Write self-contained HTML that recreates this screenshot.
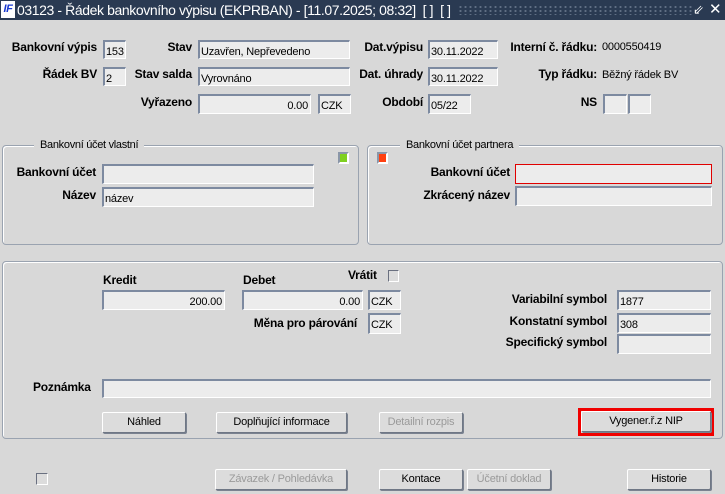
<!DOCTYPE html>
<html><head><meta charset="utf-8"><style>
*{box-sizing:border-box}
body{margin:0;width:725px;height:494px;background:#d8d8d8;position:relative;overflow:hidden;font-family:"Liberation Sans",sans-serif;font-size:12px;color:#000}
.a{position:absolute;white-space:nowrap}
.tb{left:0;top:0;width:725px;height:20px;background:#2a3a52;color:#fff;font-size:14px;letter-spacing:-0.4px;line-height:20px}
.f{position:absolute;background:#ececec;border-top:2px solid #7d8aa0;border-left:2px solid #7d8aa0;border-right:1px solid #fff;border-bottom:1px solid #fff;padding:3px 2px 0 1px;font-size:11px;letter-spacing:-0.2px;line-height:15px;white-space:nowrap;overflow:hidden}
.r{text-align:right}
.l{position:absolute;font-weight:bold;text-align:right;white-space:nowrap;letter-spacing:-0.2px}
.g{position:absolute;border:1px solid #9aa3b0;border-radius:4px;box-shadow:1px 1px 0 #fff inset}
.lg{position:absolute;background:#d8d8d8;padding:0 6px;white-space:nowrap;font-size:11px;letter-spacing:-0.3px}
.b{position:absolute;height:21px;background:#dcdcdc;border:1px solid #6f7785;border-top-color:#fff;border-left-color:#fff;box-shadow:1px 1px 0 #7a8290;text-align:center;line-height:19px;font-size:11px;letter-spacing:-0.2px;border-radius:2px}
.d{color:#9a9a9a}
.v{position:absolute;white-space:nowrap;font-size:11px;letter-spacing:-0.2px}
</style></head><body>
<div class="a tb"><span style="display:inline-block;width:14px;height:17px;background:#fff;color:#1a3ad0;font-weight:bold;font-style:italic;font-size:11px;line-height:17px;text-align:center;margin:1px 2px 0 1px;vertical-align:top">IF</span>03123 - Řádek bankovního výpisu (EKPRBAN) - [11.07.2025; 08:32]&nbsp; [ ]&nbsp; [ ]
<div style="position:absolute;left:458px;top:5px;width:235px;height:10px;background-image:radial-gradient(#8896aa 0.8px,transparent 1px);background-size:5px 4px"></div>
<span style="position:absolute;left:693px;top:0;font-size:13px">⇙</span><span style="position:absolute;left:709px;top:0;font-size:15px">✕</span></div>

<div class="l" style="left:0;width:97px;top:40px">Bankovní výpis</div>
<div class="f" style="left:103px;top:40px;width:23px;height:19px">153</div>
<div class="l" style="left:120px;width:72px;top:40px">Stav</div>
<div class="f" style="left:198px;top:40px;width:152px;height:19px">Uzavřen, Nepřevedeno</div>
<div class="l" style="left:340px;width:83px;top:40px">Dat.výpisu</div>
<div class="f" style="left:428px;top:40px;width:70px;height:19px">30.11.2022</div>
<div class="l" style="left:500px;width:97px;top:40px">Interní č. řádku:</div>
<div class="v" style="left:602px;top:41px">0000550419</div>

<div class="l" style="left:0;width:97px;top:67px">Řádek BV</div>
<div class="f" style="left:103px;top:67px;width:23px;height:19px">2</div>
<div class="l" style="left:120px;width:72px;top:67px">Stav salda</div>
<div class="f" style="left:198px;top:67px;width:152px;height:19px">Vyrovnáno</div>
<div class="l" style="left:340px;width:83px;top:67px">Dat. úhrady</div>
<div class="f" style="left:428px;top:67px;width:70px;height:19px">30.11.2022</div>
<div class="l" style="left:500px;width:97px;top:67px">Typ řádku:</div>
<div class="v" style="left:602px;top:69px">Běžný řádek BV</div>

<div class="l" style="left:120px;width:72px;top:95px">Vyřazeno</div>
<div class="f r" style="left:198px;top:94px;width:113px;height:20px">0.00</div>
<div class="f" style="left:318px;top:94px;width:33px;height:20px">CZK</div>
<div class="l" style="left:340px;width:83px;top:95px">Období</div>
<div class="f" style="left:428px;top:94px;width:43px;height:20px">05/22</div>
<div class="l" style="left:500px;width:97px;top:95px">NS</div>
<div class="f" style="left:603px;top:94px;width:24px;height:20px"></div>
<div class="f" style="left:628px;top:94px;width:23px;height:20px"></div>

<div class="g" style="left:2px;top:145px;width:357px;height:100px"></div>
<div class="lg" style="left:34px;top:139px">Bankovní účet vlastní</div>
<div class="a" style="left:338px;top:152px;width:11px;height:12px;background:#7fd020;border:2px solid #8a96a8;border-right-color:#fff;border-bottom-color:#fff"></div>
<div class="l" style="left:0;width:96px;top:165px">Bankovní účet</div>
<div class="f" style="left:102px;top:164px;width:212px;height:20px"></div>
<div class="l" style="left:0;width:96px;top:188px">Název</div>
<div class="f" style="left:102px;top:187px;width:212px;height:20px">název</div>

<div class="g" style="left:367px;top:145px;width:356px;height:100px"></div>
<div class="lg" style="left:400px;top:139px">Bankovní účet partnera</div>
<div class="a" style="left:377px;top:152px;width:11px;height:12px;background:#ff4010;border:2px solid #8a96a8;border-right-color:#fff;border-bottom-color:#fff"></div>
<div class="l" style="left:400px;width:110px;top:165px">Bankovní účet</div>
<div class="a" style="left:515px;top:164px;width:197px;height:20px;background:#ececec;border:1px solid #e00000"></div>
<div class="l" style="left:400px;width:110px;top:188px">Zkrácený název</div>
<div class="f" style="left:515px;top:186px;width:197px;height:20px"></div>

<div class="g" style="left:2px;top:261px;width:721px;height:178px"></div>
<div class="l" style="left:103px;top:273px">Kredit</div>
<div class="l" style="left:243px;top:273px">Debet</div>
<div class="l" style="left:348px;top:268px">Vrátit</div>
<div class="a" style="left:388px;top:270px;width:11px;height:12px;border:1px solid #6a7080;border-right-color:#fff;border-bottom-color:#fff;background:#dcdcdc"></div>
<div class="f r" style="left:102px;top:290px;width:123px;height:20px">200.00</div>
<div class="f r" style="left:242px;top:290px;width:121px;height:20px">0.00</div>
<div class="f" style="left:368px;top:290px;width:33px;height:20px">CZK</div>
<div class="l" style="left:230px;width:127px;top:316px">Měna pro párování</div>
<div class="f" style="left:368px;top:313px;width:33px;height:21px">CZK</div>
<div class="l" style="left:480px;width:127px;top:292px">Variabilní symbol</div>
<div class="f" style="left:617px;top:290px;width:94px;height:20px">1877</div>
<div class="l" style="left:480px;width:127px;top:314px">Konstatní symbol</div>
<div class="f" style="left:617px;top:313px;width:94px;height:20px">308</div>
<div class="l" style="left:480px;width:127px;top:335px">Specifický symbol</div>
<div class="f" style="left:617px;top:334px;width:94px;height:20px"></div>
<div class="l" style="left:33px;top:380px">Poznámka</div>
<div class="f" style="left:102px;top:379px;width:609px;height:19px"></div>

<div class="b" style="left:102px;top:412px;width:84px">Náhled</div>
<div class="b" style="left:216px;top:412px;width:131px">Doplňující informace</div>
<div class="b d" style="left:379px;top:412px;width:84px">Detailní rozpis</div>
<div class="a" style="left:578px;top:408px;width:136px;height:28px;border:3px solid #f00000"></div>
<div class="b" style="left:581px;top:411px;width:130px">Vygener.ř.z NIP</div>

<div class="a" style="left:36px;top:473px;width:12px;height:12px;border:1px solid #6a7080;border-right-color:#fff;border-bottom-color:#fff;background:#dcdcdc"></div>
<div class="b d" style="left:215px;top:469px;width:132px">Závazek / Pohledávka</div>
<div class="b" style="left:379px;top:469px;width:84px">Kontace</div>
<div class="b d" style="left:467px;top:469px;width:84px">Účetní doklad</div>
<div class="b" style="left:627px;top:469px;width:84px">Historie</div>
</body></html>
